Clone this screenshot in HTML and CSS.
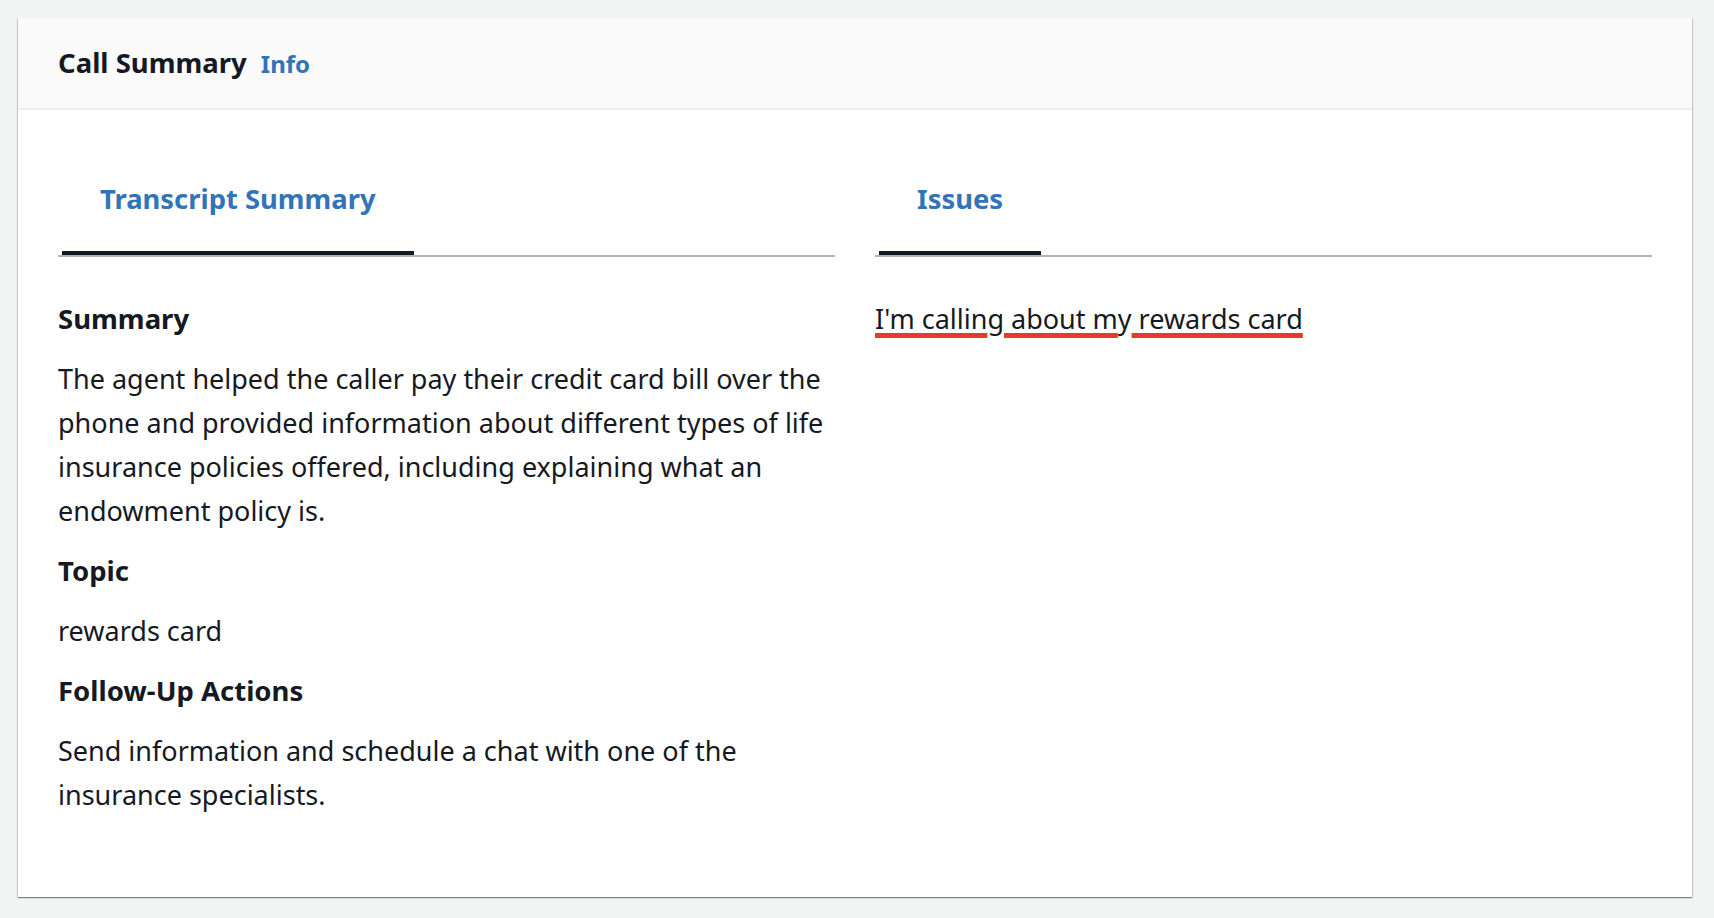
FILE: index.html
```html
<!DOCTYPE html>
<html lang="en">
<head>
<meta charset="utf-8">
<title>Call Summary</title>
<link rel="stylesheet" href="styles.css">
</head>
<body>
  <section class="card">
    <header class="card-header">
      <h2 class="card-title">Call Summary</h2>
      <a class="info-link" href="#">Info</a>
    </header>
    <div class="card-body">
      <div class="panel">
        <div class="tablist">
          <button class="tab active">Transcript Summary</button>
        </div>
        <div class="panel-content">
          <h3 class="label">Summary</h3>
          <p class="text">The agent helped the caller pay their credit card bill over the phone and provided information about different types of life insurance policies offered, including explaining what an endowment policy is.</p>
          <h3 class="label">Topic</h3>
          <p class="text">rewards card</p>
          <h3 class="label">Follow-Up Actions</h3>
          <p class="text">Send information and schedule a chat with one of the insurance specialists.</p>
        </div>
      </div>
      <div class="panel">
        <div class="tablist">
          <button class="tab active">Issues</button>
        </div>
        <div class="panel-content">
          <p class="text"><span class="issue">I'm callin</span>g<span class="issue"> about m</span>y<span class="issue"> rewards card</span></p>
        </div>
      </div>
    </div>
  </section>
</body>
</html>
```

FILE: styles.css
```css
* {
  box-sizing: border-box;
}

html, body {
  margin: 0;
  height: 100%;
}

body {
  background: #f2f3f3;
  font-family: "Noto Sans", "Open Sans", Arial, sans-serif;
  color: #16191f;
  padding: 18px 22px 21px 18px;
  display: flex;
  flex-direction: column;
}

.card {
  flex: 1;
  background: #ffffff;
  box-shadow: 0 1px 1px 0 rgba(0, 28, 36, 0.3),
              1px 1px 1px 0 rgba(0, 28, 36, 0.15),
              -1px 1px 1px 0 rgba(0, 28, 36, 0.15);
  display: flex;
  flex-direction: column;
}

.card-header {
  background: #fafafa;
  border-bottom: 2px solid #eaeded;
  height: 92px;
  padding: 0 40px;
  display: flex;
  align-items: center;
  gap: 14px;
}

.card-title {
  margin: 0;
  font-size: 27.5px;
  font-weight: 700;
  line-height: 36px;
  color: #16191f;
}

.info-link {
  font-size: 24px;
  font-weight: 700;
  color: #3174b8;
  text-decoration: none;
  line-height: 36px;
  padding-top: 2px;
}

.card-body {
  padding: 40px 40px;
  display: grid;
  grid-template-columns: 1fr 1fr;
  column-gap: 40px;
  align-items: start;
}

.tablist {
  display: flex;
  border-bottom: 2px solid #aab7b8;
  padding-left: 4px;
}

.tab {
  font-family: inherit;
  font-size: 27.4px;
  font-weight: 700;
  line-height: 36px;
  color: #3174b8;
  background: none;
  border: none;
  border-bottom: 4px solid transparent;
  padding: 31px 38px 34px;
  margin: 0;
  cursor: pointer;
}

.tab.active {
  border-bottom-color: #16191f;
}

.panel-content {
  padding-top: 40px;
  display: flex;
  flex-direction: column;
  gap: 16px;
}

.label {
  margin: 0;
  font-size: 27.5px;
  font-weight: 700;
  line-height: 44px;
}

.text {
  margin: 0;
  font-size: 27px;
  font-weight: 400;
  line-height: 44px;
}

.issue {
  text-decoration: underline;
  text-decoration-color: #e8392b;
  text-decoration-thickness: 5px;
  text-underline-offset: 4px;
  text-decoration-skip-ink: none;
}
```
